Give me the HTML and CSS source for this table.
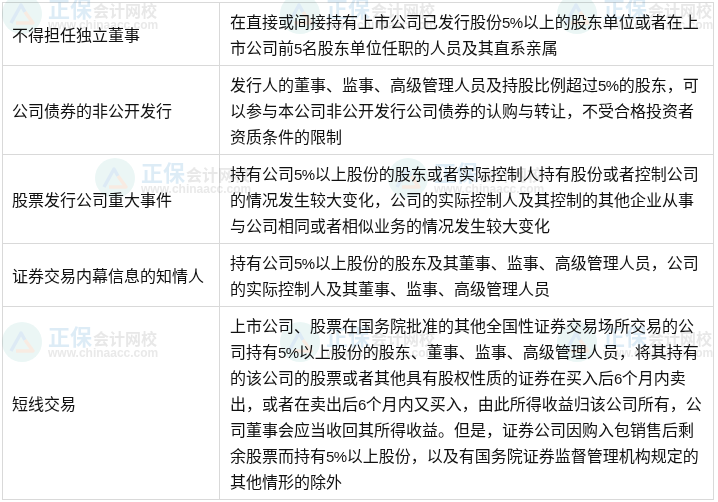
FILE: index.html
```html
<!DOCTYPE html>
<html lang="zh-CN">
<head>
<meta charset="utf-8">
<title>表格</title>
<link rel="stylesheet" href="styles.css">
</head>
<body>
<div class="page">
  <table class="tbl">
    <colgroup><col class="c1"><col class="c2"></colgroup>
    <tbody>
      <tr>
        <td class="k">不得担任独立董事</td>
        <td class="v">在直接或间接持有上市公司已发行股份<span class="n">5%</span>以上的股东单位或者在上<br>市公司前<span class="n">5</span>名股东单位任职的人员及其直系亲属</td>
      </tr>
      <tr>
        <td class="k">公司债券的非公开发行</td>
        <td class="v">发行人的董事、监事、高级管理人员及持股比例超过<span class="n">5%</span>的股东，可<br>以参与本公司非公开发行公司债券的认购与转让，不受合格投资者<br>资质条件的限制</td>
      </tr>
      <tr>
        <td class="k">股票发行公司重大事件</td>
        <td class="v">持有公司<span class="n">5%</span>以上股份的股东或者实际控制人持有股份或者控制公司<br>的情况发生较大变化，公司的实际控制人及其控制的其他企业从事<br>与公司相同或者相似业务的情况发生较大变化</td>
      </tr>
      <tr>
        <td class="k">证券交易内幕信息的知情人</td>
        <td class="v">持有公司<span class="n">5%</span>以上股份的股东及其董事、监事、高级管理人员，公司<br>的实际控制人及其董事、监事、高级管理人员</td>
      </tr>
      <tr>
        <td class="k">短线交易</td>
        <td class="v">上市公司、股票在国务院批准的其他全国性证券交易场所交易的公<br>司持有<span class="n">5%</span>以上股份的股东、董事、监事、高级管理人员，将其持有<br>的该公司的股票或者其他具有股权性质的证券在买入后<span class="n">6</span>个月内卖<br>出，或者在卖出后<span class="n">6</span>个月内又买入，由此所得收益归该公司所有，公<br>司董事会应当收回其所得收益。但是，证券公司因购入包销售后剩<br>余股票而持有<span class="n">5%</span>以上股份，以及有国务院证券监督管理机构规定的<br>其他情形的除外</td>
      </tr>
    </tbody>
  </table>

  <div class="wm wm-a">
    <svg class="logo" viewBox="0 0 40 40" width="40" height="40"><circle cx="20" cy="20" r="20" fill="#e2f3f1"/><path d="M9 29 L19 11 L23 18" fill="none" stroke="#cfe1f1" stroke-width="3.5" stroke-linejoin="round"/><path d="M14 29 L31 29 L23 18" fill="none" stroke="#f5e3d6" stroke-width="3.5" stroke-linejoin="round"/></svg>
    <div class="wm-t"><div class="wm-top"><span class="zb">正保</span><span class="kj">会计网校</span></div><div class="url">www.chinaacc.com</div></div>
  </div>
  <div class="wm wm-b">
    <svg class="logo" viewBox="0 0 40 40" width="40" height="40"><circle cx="20" cy="20" r="20" fill="#e2f3f1"/><path d="M9 29 L19 11 L23 18" fill="none" stroke="#cfe1f1" stroke-width="3.5" stroke-linejoin="round"/><path d="M14 29 L31 29 L23 18" fill="none" stroke="#f5e3d6" stroke-width="3.5" stroke-linejoin="round"/></svg>
    <div class="wm-t"><div class="wm-top"><span class="zb">正保</span><span class="kj">会计网校</span></div><div class="url">www.chinaacc.com</div></div>
  </div>
  <div class="wm wm-c">
    <svg class="logo" viewBox="0 0 40 40" width="40" height="40"><circle cx="20" cy="20" r="20" fill="#e2f3f1"/><path d="M9 29 L19 11 L23 18" fill="none" stroke="#cfe1f1" stroke-width="3.5" stroke-linejoin="round"/><path d="M14 29 L31 29 L23 18" fill="none" stroke="#f5e3d6" stroke-width="3.5" stroke-linejoin="round"/></svg>
    <div class="wm-t"><div class="wm-top"><span class="zb">正保</span><span class="kj">会计网校</span></div><div class="url">www.chinaacc.com</div></div>
  </div>
  <div class="wm wm-d">
    <svg class="logo" viewBox="0 0 40 40" width="40" height="40"><circle cx="20" cy="20" r="20" fill="#e2f3f1"/><path d="M9 29 L19 11 L23 18" fill="none" stroke="#cfe1f1" stroke-width="3.5" stroke-linejoin="round"/><path d="M14 29 L31 29 L23 18" fill="none" stroke="#f5e3d6" stroke-width="3.5" stroke-linejoin="round"/></svg>
    <div class="wm-t"><div class="wm-top"><span class="zb">正保</span><span class="kj">会计网校</span></div><div class="url">www.chinaacc.com</div></div>
  </div>
  <div class="wm wm-e">
    <svg class="logo" viewBox="0 0 40 40" width="40" height="40"><circle cx="20" cy="20" r="20" fill="#e2f3f1"/><path d="M9 29 L19 11 L23 18" fill="none" stroke="#cfe1f1" stroke-width="3.5" stroke-linejoin="round"/><path d="M14 29 L31 29 L23 18" fill="none" stroke="#f5e3d6" stroke-width="3.5" stroke-linejoin="round"/></svg>
    <div class="wm-t"><div class="wm-top"><span class="zb">正保</span><span class="kj">会计网校</span></div><div class="url">www.chinaacc.com</div></div>
  </div>
  <div class="wm wm-f">
    <svg class="logo" viewBox="0 0 40 40" width="40" height="40"><circle cx="20" cy="20" r="20" fill="#e2f3f1"/><path d="M9 29 L19 11 L23 18" fill="none" stroke="#cfe1f1" stroke-width="3.5" stroke-linejoin="round"/><path d="M14 29 L31 29 L23 18" fill="none" stroke="#f5e3d6" stroke-width="3.5" stroke-linejoin="round"/></svg>
    <div class="wm-t"><div class="wm-top"><span class="zb">正保</span><span class="kj">会计网校</span></div><div class="url">www.chinaacc.com</div></div>
  </div>
  <div class="wm wm-g">
    <svg class="logo" viewBox="0 0 40 40" width="40" height="40"><circle cx="20" cy="20" r="20" fill="#e2f3f1"/><path d="M9 29 L19 11 L23 18" fill="none" stroke="#cfe1f1" stroke-width="3.5" stroke-linejoin="round"/><path d="M14 29 L31 29 L23 18" fill="none" stroke="#f5e3d6" stroke-width="3.5" stroke-linejoin="round"/></svg>
    <div class="wm-t"><div class="wm-top"><span class="zb">正保</span><span class="kj">会计网校</span></div><div class="url">www.chinaacc.com</div></div>
  </div>
  <div class="wm wm-h">
    <svg class="logo" viewBox="0 0 40 40" width="40" height="40"><circle cx="20" cy="20" r="20" fill="#e2f3f1"/><path d="M9 29 L19 11 L23 18" fill="none" stroke="#cfe1f1" stroke-width="3.5" stroke-linejoin="round"/><path d="M14 29 L31 29 L23 18" fill="none" stroke="#f5e3d6" stroke-width="3.5" stroke-linejoin="round"/></svg>
    <div class="wm-t"><div class="wm-top"><span class="zb">正保</span><span class="kj">会计网校</span></div><div class="url">www.chinaacc.com</div></div>
  </div>
</div>
</body>
</html>
```

FILE: styles.css
```css
html, body {
  margin: 0;
  padding: 0;
  background: #ffffff;
}
.page {
  position: relative;
  width: 718px;
  height: 502px;
  overflow: hidden;
  font-family: "Noto Sans CJK SC", "Noto Sans", sans-serif;
}
.tbl {
  border-collapse: collapse;
  table-layout: fixed;
  width: 711px;
  margin: 2px 0 0 2px;
  color: #111111;
  font-size: 16px;
}
.c1 { width: 217px; }
.c2 { width: 494px; }
.tbl td {
  border: 1px solid #d9d9d9;
  padding: 5px 8px 5px 10px;
  line-height: 26px;
  white-space: nowrap;
  vertical-align: middle;
}
.tbl td.k {
  padding-left: 9px;
}
.n {
  font-family: "Liberation Sans", sans-serif;
  font-size: 15px;
  line-height: 10px;
  letter-spacing: -0.5px;
}
.wm {
  position: absolute;
  display: flex;
  align-items: flex-start;
  gap: 6px;
  width: 160px;
  height: 42px;
  opacity: 0.7;
  mix-blend-mode: multiply;
  pointer-events: none;
}
.wm .logo {
  flex: none;
  display: block;
}
.wm-t {
  display: flex;
  flex-direction: column;
  font-weight: bold;
}
.wm-top {
  display: flex;
  align-items: baseline;
  line-height: 26px;
  height: 26px;
}
.zb {
  font-size: 22px;
  color: #cfe4f3;
}
.kj {
  font-size: 16px;
  color: #dedede;
  margin-left: 1px;
}
.url {
  font-family: "Liberation Sans", sans-serif;
  font-size: 12px;
  line-height: 12px;
  color: #e0e0e0;
  margin-top: -1px;
}
.wm-a { left: 2px; top: -6px; }
.wm-b { left: 280px; top: -6px; }
.wm-c { left: 557px; top: -6px; }
.wm-d { left: 95px; top: 158px; }
.wm-e { left: 388px; top: 158px; }
.wm-f { left: 2px; top: 322px; }
.wm-g { left: 280px; top: 322px; }
.wm-h { left: 557px; top: 322px; }
```
